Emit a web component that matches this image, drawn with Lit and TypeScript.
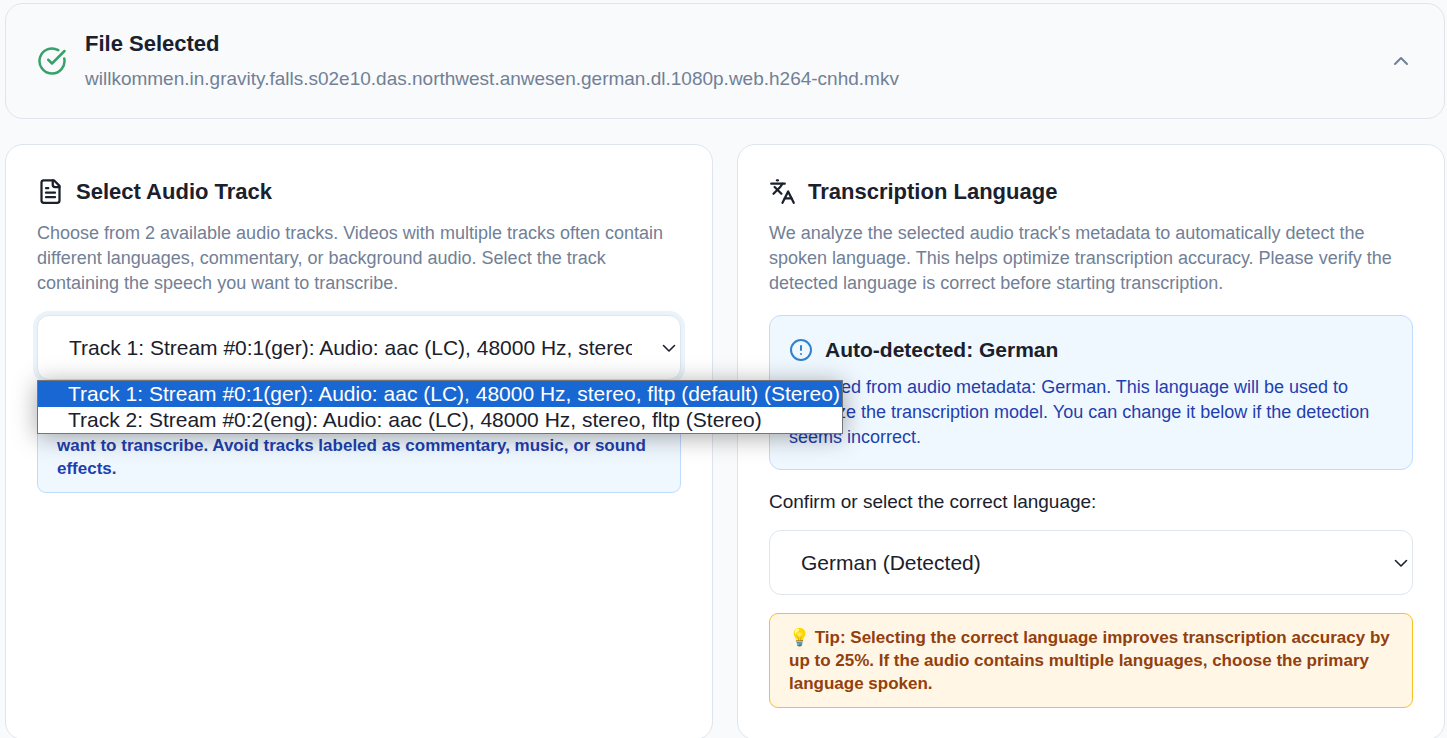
import { LitElement, html, css, svg } from "lit";
import { customElement, state } from "lit/decorators.js";
import { classMap } from "lit/directives/class-map.js";

const icons = {
  check: svg`<path d="M21.801 10A10 10 0 1 1 17 3.335"/><path d="m9 11 3 3L22 4"/>`,
  up: svg`<path d="m18 15-6-6-6 6"/>`,
  down: svg`<path d="m6.5 9.5 5.5 5.5 5.5-5.5"/>`,
  file: svg`<path d="M15 2H6a2 2 0 0 0-2 2v16a2 2 0 0 0 2 2h12a2 2 0 0 0 2-2V7Z"/><path d="M14 2v4a2 2 0 0 0 2 2h4"/><path d="M10 9H8"/><path d="M16 13H8"/><path d="M16 17H8"/>`,
  languages: svg`<path d="m5 8 6 6"/><path d="m4 14 6-6 2-3"/><path d="M2 5h12"/><path d="M7 2h1"/><path d="m22 22-5-10-5 10"/><path d="M14 18h6"/>`,
  alert: svg`<circle cx="12" cy="12" r="10"/><path d="M12 8v4"/><path d="M12 16h.01"/>`,
};

const icon = (name: keyof typeof icons, cls: string) => html`
  <svg class="icon ${cls}" viewBox="0 0 24 24" aria-hidden="true">${icons[name]}</svg>
`;

const tracks = [
  "Track 1: Stream #0:1(ger): Audio: aac (LC), 48000 Hz, stereo, fltp (default) (Stereo)",
  "Track 2: Stream #0:2(eng): Audio: aac (LC), 48000 Hz, stereo, fltp (Stereo)",
];

@customElement("app-root")
export class AppRoot extends LitElement {
  @state() private track = 0;
  @state() private listOpen = true;

  static styles = css`
    :host {
      display: block;
      height: 100vh;
      overflow-y: auto;
      scrollbar-width: none;
      box-sizing: border-box;
      padding: 3px 2px 0 5px;
      background: #f8fafc;
      color: #1a202c;
      font-family: "Liberation Sans", Arial, sans-serif;
    }
    *, *::before, *::after { box-sizing: border-box; }
    h2, h3, p, ul { margin: 0; padding: 0; }
    .icon {
      flex: none;
      display: block;
      fill: none;
      stroke: currentColor;
      stroke-width: 2;
      stroke-linecap: round;
      stroke-linejoin: round;
    }
    .card {
      border: 1px solid #dfe5ed;
      border-radius: 18px;
      background: #fff;
    }
    .summary {
      display: flex;
      align-items: center;
      gap: 18px;
      width: 100%;
      margin: 0 0 25px;
      padding: 24px 31px;
      background: #f8fafc;
      color: inherit;
      font: inherit;
      text-align: left;
    }
    .summary-text { flex: 1; min-width: 0; display: grid; gap: 4px; }
    .title { font-size: 22px; line-height: 31px; font-weight: 700; }
    .filename { font-size: 19px; line-height: 31px; color: #718096; overflow-wrap: anywhere; }
    .size-30 { width: 30px; height: 30px; }
    .size-27 { width: 27px; height: 27px; }
    .size-24 { width: 24px; height: 24px; }
    .green { color: #38a169; }
    .gray { color: #718096; }
    .blue { color: #3182ce; }
    .columns {
      display: grid;
      grid-template-columns: repeat(2, minmax(0, 1fr));
      gap: 24px;
    }
    .panel { padding: 31px; }
    .heading { display: flex; align-items: center; gap: 12px; margin-bottom: 14px; }
    .text { font-size: 18px; line-height: 25px; color: #718096; }
    .picker { position: relative; margin-top: 19px; }
    .field { display: grid; align-items: center; }
    .field > * { grid-area: 1 / 1; }
    select {
      appearance: none;
      width: 100%;
      height: 65px;
      padding: 0 48px 0 31px;
      border: 1px solid #dfe5ed;
      border-radius: 12px;
      background: #fff;
      color: #1a202c;
      font: 21px "Liberation Sans", Arial, sans-serif;
      outline: none;
    }
    .open select { box-shadow: 0 0 0 4px #eaf3fa; }
    .arrow {
      width: 24px;
      height: 24px;
      justify-self: end;
      pointer-events: none;
      stroke-width: 1.6;
    }
    .list {
      position: absolute;
      top: 100%;
      left: 0;
      z-index: 2;
      width: max-content;
      border: 1px solid #767676;
      background: #fff;
      box-shadow: 0 3px 24px rgba(0, 0, 0, 0.35);
      list-style: none;
      font-size: 21px;
      line-height: 26px;
    }
    .list li { padding: 0 2px 0 30px; }
    .list .active { background: #1967d2; color: #fff; }
    .note {
      margin-top: 18px;
      padding: 12px 19px;
      border: 1px solid;
      border-radius: 9px;
      font-size: 17px;
      line-height: 23px;
      font-weight: 700;
    }
    .info { padding-top: 35px; border-color: #bfdbfe; background: #f0f8ff; color: #1e40af; }
    .warn { border-color: #fbbf24; background: #fff6e5; color: #92400e; }
    .detected {
      margin-top: 19px;
      padding: 20px 19px 19px;
      border: 1px solid #bfdbfe;
      border-radius: 12px;
      background: #f0f8ff;
    }
    .detected-head { display: flex; align-items: center; gap: 12px; margin-bottom: 11px; }
    .detected-head h3 { font-size: 21px; line-height: 28px; }
    .detected .text { color: #1e40af; }
    .label { display: block; margin: 18px 0 14px; font-size: 19px; line-height: 28px; }
  `;

  private pick(index: number) {
    this.track = index;
    this.listOpen = false;
  }

  render() {
    return html`
      <button class="card summary" type="button" aria-expanded="true">
        ${icon("check", "size-30 green")}
        <span class="summary-text">
          <span class="title">File Selected</span>
          <span class="filename">willkommen.in.gravity.falls.s02e10.das.northwest.anwesen.german.dl.1080p.web.h264-cnhd.mkv</span>
        </span>
        ${icon("up", "size-24 gray")}
      </button>
      <main class="columns">
        <section class="card panel">
          <div class="heading">
            ${icon("file", "size-27")}
            <h2 class="title" id="track-title">Select Audio Track</h2>
          </div>
          <p class="text">Choose from 2 available audio tracks. Videos with multiple tracks often contain different languages, commentary, or background audio. Select the track containing the speech you want to transcribe.</p>
          <div class=${classMap({ picker: true, open: this.listOpen })}>
            <div class="field">
              <select
                aria-labelledby="track-title"
                @change=${(e: Event) => this.pick((e.target as HTMLSelectElement).selectedIndex)}
              >
                ${tracks.map((t, i) => html`<option ?selected=${i === this.track}>${t}</option>`)}
              </select>
              ${icon("down", "arrow")}
            </div>
            ${this.listOpen
              ? html`<ul class="list" role="listbox" aria-labelledby="track-title">
                  ${tracks.map((t, i) => html`<li
                    role="option"
                    aria-selected=${i === this.track}
                    class=${classMap({ active: i === this.track })}
                    @click=${() => this.pick(i)}
                  >${t}</li>`)}
                </ul>`
              : null}
          </div>
          <p class="note info">want to transcribe. Avoid tracks labeled as commentary, music, or sound effects.</p>
        </section>
        <section class="card panel">
          <div class="heading">
            ${icon("languages", "size-27")}
            <h2 class="title">Transcription Language</h2>
          </div>
          <p class="text">We analyze the selected audio track's metadata to automatically detect the spoken language. This helps optimize transcription accuracy. Please verify the detected language is correct before starting transcription.</p>
          <div class="detected">
            <div class="detected-head">
              ${icon("alert", "size-24 blue")}
              <h3>Auto-detected: German</h3>
            </div>
            <p class="text">Detected from audio metadata: German. This language will be used to optimize the transcription model. You can change it below if the detection seems incorrect.</p>
          </div>
          <label class="label" for="language">Confirm or select the correct language:</label>
          <div class="field">
            <select id="language">
              <option>German (Detected)</option>
              <option>English</option>
            </select>
            ${icon("down", "arrow")}
          </div>
          <p class="note warn">💡 Tip: Selecting the correct language improves transcription accuracy by up to 25%. If the audio contains multiple languages, choose the primary language spoken.</p>
        </section>
      </main>
    `;
  }
}
